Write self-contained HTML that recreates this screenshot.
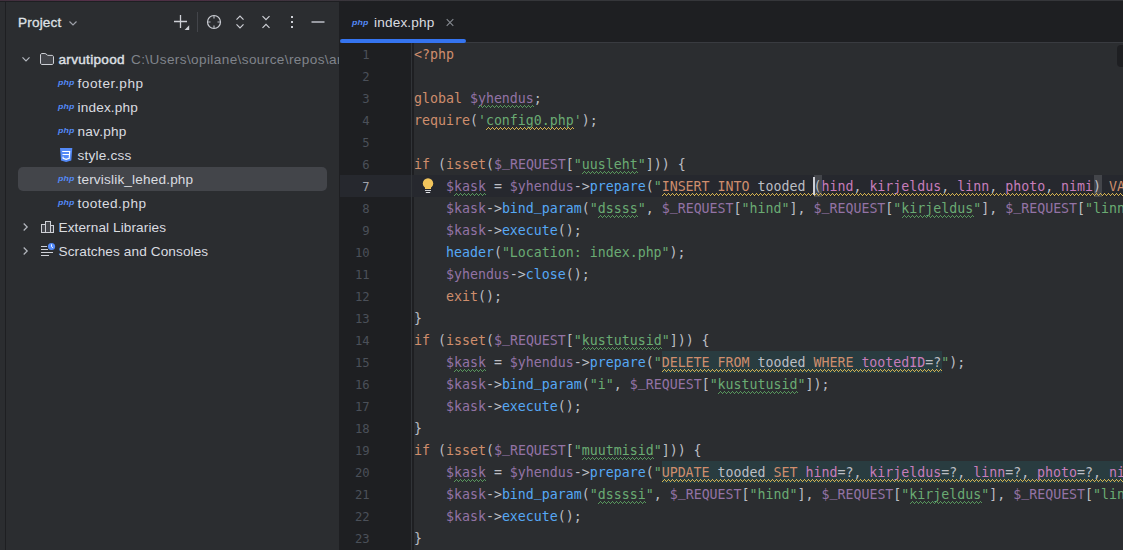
<!DOCTYPE html>
<html lang="et">
<head>
<meta charset="utf-8">
<title>index.php</title>
<style>
*{box-sizing:border-box;margin:0;padding:0}
html,body{width:1123px;height:550px;overflow:hidden;background:#2B2D30}
body{position:relative;font-family:"Liberation Sans",sans-serif;font-size:14px;color:#DFE1E5}
.abs{position:absolute}
#topline{left:0;top:0;width:1123px;height:1px;background:linear-gradient(90deg,#40303d 0,#553049 90px,#4a3043 200px,#3a353c 330px,#35363a 420px,#35363a 100%)}
#topdark{left:0;top:1px;width:1123px;height:1px;background:#1E1F22}
#stripe{left:5px;top:2px;width:1px;height:548px;background:#1E1F22}
#panel{left:6px;top:2px;width:333px;height:548px;background:#2B2D30;overflow:hidden}
#editor{left:339px;top:2px;width:784px;height:548px;background:#1E1F22;overflow:hidden}
/* panel (coords relative to page via wrappers offset) */
.t{position:absolute;white-space:pre;line-height:24px;height:24px;transform:translateY(1px);font-size:13.6px;letter-spacing:0.17px;color:#DADCE0}
.row{position:absolute;left:0;width:333px;height:24px}
.sel{position:absolute;left:12px;top:165px;width:309px;height:24px;border-radius:5px;background:#43454A}
.gray{color:#80848B}
.php{position:absolute;font-family:"Liberation Sans",sans-serif;font-style:italic;font-weight:bold;font-size:7.8px;letter-spacing:0.1px;margin-top:-0.5px;transform:scaleX(1.12);transform-origin:0 50%;color:#548AF7;line-height:24px;height:24px}
svg{position:absolute;overflow:visible}
/* editor */
#tabtxt{left:35px;top:9px;line-height:24px;color:#DADCE0;font-size:13.6px;letter-spacing:0.17px}
#uline{left:1px;top:37px;width:126px;height:4px;border-radius:2px;background:#3574F0}
#edline{left:1px;top:40px;width:783px;height:1px;background:#393B40}
#gutter{left:1px;top:41px;width:74px;height:507px;background:#1E1F22}
#gsep{left:72px;top:41px;width:1px;height:507px;background:#313438}
#code{left:75px;top:41px;width:709px;height:507px;background:#2B2D30}
#currow{left:1px;top:173px;width:783px;height:22px;background:#26282E}
#widget{left:778px;top:43px;width:12px;height:22px;border-radius:4px;background:#1E1F22}
.mono{font-family:"DejaVu Sans Mono","Liberation Mono",monospace;font-size:13.288px}
.no{position:absolute;left:0;width:30.6px;font-size:12.2px;text-align:right;height:22px;line-height:22px;color:#4B5059}
.no.cur{color:#A1A3AB}
#nums{left:0;top:42px;width:75px;height:507px}
#lines{left:76px;top:41px;width:2000px;height:507px;color:#BCBEC4}
.ln{position:absolute;left:0;height:22px;line-height:22px;white-space:pre}
.k{color:#CF8E6D}.v{color:#9373A5}.f{color:#56A8F5}.s{color:#6AAB73}.c{color:#C77DBB}.q{color:#BCBEC4}
.u{position:relative;top:-3px}
.inj{position:absolute;height:22px;background:#293C40}
.brace{position:absolute;top:175px;width:8px;height:22px;background:#43454A}
#caret{left:813px;top:177px;width:2px;height:18px;background:#CED0D6}
</style>
</head>
<body>
<div class="abs" id="topline"></div>
<div class="abs" id="topdark"></div>
<div class="abs" id="stripe"></div>

<div class="abs" id="panel">
  <div class="sel"></div>
  <div class="t" style="left:12px;top:8px;color:#DFE1E5;-webkit-text-stroke:0.3px #DFE1E5" id="ptitle">Project</div>
  <div class="t" style="left:52.5px;top:45px;letter-spacing:0.29px;-webkit-text-stroke:0.45px #DFE1E5" id="root">arvutipood</div>
  <div class="t gray" style="left:125px;top:45px;letter-spacing:0.38px" id="rootpath">C:\Users\opilane\source\repos\arvutipood</div>
  <div class="t" style="left:71.4px;top:69px;letter-spacing:0.59px">footer.php</div>
  <div class="t" style="left:71.5px;top:93px">index.php</div>
  <div class="t" style="left:71.5px;top:117px;letter-spacing:0.25px">nav.php</div>
  <div class="t" style="left:71.5px;top:141px;letter-spacing:0.22px">style.css</div>
  <div class="t" style="left:71.5px;top:165px">tervislik_lehed.php</div>
  <div class="t" style="left:71.5px;top:189px;letter-spacing:0.47px">tooted.php</div>
  <div class="t" style="left:52.5px;top:213px;letter-spacing:0.10px">External Libraries</div>
  <div class="t" style="left:52.5px;top:237px;letter-spacing:0.11px">Scratches and Consoles</div>
  <div class="php" style="left:52px;top:69px">php</div>
  <div class="php" style="left:52px;top:93px">php</div>
  <div class="php" style="left:52px;top:117px">php</div>
  <div class="php" style="left:52px;top:165px">php</div>
  <div class="php" style="left:52px;top:189px">php</div>
  
</div>

<svg class="abs" width="340" height="550" style="left:0;top:0" viewBox="0 0 340 550" fill="none">
  <!-- header chevron -->
  <path d="M69.5 21.5 L73 25 L76.5 21.5" stroke="#9DA0A8" stroke-width="1.2"/>
  <!-- plus -->
  <path d="M174 21.5 H187 M180.5 15 V28" stroke="#CED0D6" stroke-width="1.3"/>
  <path d="M184.6 29.9 H189.2 V25.3 Z" fill="#CED0D6"/>
  <rect x="197" y="12" width="1" height="20" fill="#43454A"/>
  <!-- locate -->
  <circle cx="214" cy="22" r="6.5" stroke="#CED0D6" stroke-width="1.2"/>
  <path d="M214 15.5 V18.5 M214 25.5 V28.5 M207.5 22 H210.5 M217.5 22 H220.5" stroke="#B4B8BF" stroke-width="1.2"/>
  <!-- expand all -->
  <path d="M236.5 19.7 L240 16.2 L243.5 19.7 M236.5 24.3 L240 27.8 L243.5 24.3" stroke="#CED0D6" stroke-width="1.2"/>
  <!-- collapse all -->
  <path d="M262.5 16.2 L266 19.7 L269.5 16.2 M262.5 27.8 L266 24.3 L269.5 27.8" stroke="#CED0D6" stroke-width="1.2"/>
  <!-- more -->
  <rect x="291" y="16" width="2" height="2" fill="#CED0D6"/><rect x="291" y="21" width="2" height="2" fill="#CED0D6"/><rect x="291" y="26" width="2" height="2" fill="#CED0D6"/>
  <!-- minimize -->
  <rect x="311.5" y="21.2" width="13" height="1.6" fill="#B4B6BD"/>
  <!-- tree chevrons -->
  <path d="M22.5 57.3 L26 60.8 L29.5 57.3" stroke="#B4B8BF" stroke-width="1.2"/>
  <path d="M23.7 223.5 L27.2 227 L23.7 230.5" stroke="#B4B8BF" stroke-width="1.2"/>
  <path d="M23.7 247.5 L27.2 251 L23.7 254.5" stroke="#B4B8BF" stroke-width="1.2"/>
  <!-- folder -->
  <path d="M40.5 55 C40.5 54.17 41.17 53.5 42 53.5 H44.9 C45.25 53.5 45.58 53.62 45.85 53.84 L47.6 55.27 C47.69 55.34 47.8 55.38 47.92 55.38 H52 C52.83 55.38 53.5 56.05 53.5 56.88 V63 C53.5 63.83 52.83 64.5 52 64.5 H42 C41.17 64.5 40.5 63.83 40.5 63 Z" fill="#43454A" stroke="#CED0D6" stroke-width="1"/>
  <!-- css shield -->
  <path d="M60 148 H72.3 L71.3 160.4 L66.15 162 L61 160.4 Z" fill="#548AF7"/>
  <path d="M62.2 151.5 H69.7 L69.2 158.3 L66.1 159.3 L63.1 158.3 L62.95 156.6 M62.5 154.5 H69.4" stroke="#FFFFFF" stroke-width="1.15"/>
  <!-- library -->
  <rect x="41.5" y="224.5" width="4" height="8" fill="#43454A" stroke="#CED0D6"/>
  <rect x="45.5" y="221.5" width="5" height="11" fill="#43454A" stroke="#CED0D6"/>
  <rect x="50.5" y="225.5" width="3" height="7" fill="#43454A" stroke="#CED0D6"/>
  <!-- scratches -->
  <path d="M41 246.5 H47 M41 249.5 H48 M41 252.5 H53 M41 255.5 H49" stroke="#CED0D6" stroke-width="1"/>
  <circle cx="51.5" cy="246.5" r="3.6" fill="#548AF7"/>
  <path d="M51.5 244.3 V246.7 L53 247.8" stroke="#FFFFFF" stroke-width="0.9"/>
</svg>

<div class="abs" id="editor">
  <div class="abs" id="gutter"></div>
  <div class="abs" id="code"></div>
  <div class="abs" id="currow"></div>
  <div class="abs" id="gsep"></div>
  <div class="abs" id="edline"></div>
  <div class="abs" id="uline"></div>
  <div class="php" style="left:13px;top:9px">php</div>
  <div class="abs" id="tabtxt">index.php</div>
  <div class="abs" id="widget"></div>
  <div class="abs mono" id="nums"><div class="no" style="top:0px">1</div><div class="no" style="top:22px">2</div><div class="no" style="top:44px">3</div><div class="no" style="top:66px">4</div><div class="no" style="top:88px">5</div><div class="no" style="top:110px">6</div><div class="no cur" style="top:132px">7</div><div class="no" style="top:154px">8</div><div class="no" style="top:176px">9</div><div class="no" style="top:198px">10</div><div class="no" style="top:220px">11</div><div class="no" style="top:242px">12</div><div class="no" style="top:264px">13</div><div class="no" style="top:286px">14</div><div class="no" style="top:308px">15</div><div class="no" style="top:330px">16</div><div class="no" style="top:352px">17</div><div class="no" style="top:374px">18</div><div class="no" style="top:396px">19</div><div class="no" style="top:418px">20</div><div class="no" style="top:440px">21</div><div class="no" style="top:462px">22</div><div class="no" style="top:484px">23</div></div>
  <svg width="784" height="42" viewBox="339 2 784 42" style="left:0;top:0" fill="none">
    <path d="M446.7 19.2 L453.3 25.8 M453.3 19.2 L446.7 25.8" stroke="#868A91" stroke-width="1.1"/>
  </svg>
</div>

<!-- code layer in page coordinates -->
<div class="abs" id="codelayer" style="left:414px;top:43px;width:709px;height:507px;overflow:hidden">
  <div class="abs" style="left:-414px;top:-43px;width:3000px;height:550px">
    <div class="inj" style="left:662px;top:351px;width:280px"></div><div class="inj" style="left:662px;top:461px;width:632px"></div>
    <div class="brace" style="left:814px"></div>
    <div class="brace" style="left:1094px"></div>
    <div class="abs mono" style="left:414px;top:44px;color:#BCBEC4">
<div class="ln" style="top:0px"><span class="k">&lt;?php</span></div>
<div class="ln" style="top:22px"></div>
<div class="ln" style="top:44px"><span class="k">global</span> <span class="v">$yhendus</span>;</div>
<div class="ln" style="top:66px"><span class="k">require</span>(<span class="s">'config0.php'</span>);</div>
<div class="ln" style="top:88px"></div>
<div class="ln" style="top:110px"><span class="k">if</span> (<span class="k">isset</span>(<span class="v">$<span class="u">_</span>REQUEST</span>[<span class="s">"uusleht"</span>])) {</div>
<div class="ln" style="top:132px">    <span class="v">$kask</span> = <span class="v">$yhendus</span>-&gt;<span class="f">prepare</span>(<span class="s">"</span><span class="k">INSERT</span><span class="q"> </span><span class="k">INTO</span><span class="q"> tooded </span><span class="q">(</span><span class="c">hind</span><span class="q">, </span><span class="c">kirjeldus</span><span class="q">, </span><span class="c">linn</span><span class="q">, </span><span class="c">photo</span><span class="q">, </span><span class="c">nimi</span><span class="q">)</span><span class="q"> </span><span class="k">VALUES</span><span class="q"> (?, ?, ?, ?, ?)</span><span class="s">"</span>);</div>
<div class="ln" style="top:154px">    <span class="v">$kask</span>-&gt;<span class="f">bind<span class="u">_</span>param</span>(<span class="s">"dssss"</span>, <span class="v">$<span class="u">_</span>REQUEST</span>[<span class="s">"hind"</span>], <span class="v">$<span class="u">_</span>REQUEST</span>[<span class="s">"kirjeldus"</span>], <span class="v">$<span class="u">_</span>REQUEST</span>[<span class="s">"linn"</span>], <span class="v">$<span class="u">_</span>REQUEST</span>[<span class="s">"photo"</span>], <span class="v">$<span class="u">_</span>REQUEST</span>[<span class="s">"nimi"</span>]);</div>
<div class="ln" style="top:176px">    <span class="v">$kask</span>-&gt;<span class="f">execute</span>();</div>
<div class="ln" style="top:198px">    <span class="f">header</span>(<span class="s">"Location: index.php"</span>);</div>
<div class="ln" style="top:220px">    <span class="v">$yhendus</span>-&gt;<span class="f">close</span>();</div>
<div class="ln" style="top:242px">    <span class="k">exit</span>();</div>
<div class="ln" style="top:264px">}</div>
<div class="ln" style="top:286px"><span class="k">if</span> (<span class="k">isset</span>(<span class="v">$<span class="u">_</span>REQUEST</span>[<span class="s">"kustutusid"</span>])) {</div>
<div class="ln" style="top:308px">    <span class="v">$kask</span> = <span class="v">$yhendus</span>-&gt;<span class="f">prepare</span>(<span class="s">"</span><span class="k">DELETE</span><span class="q"> </span><span class="k">FROM</span><span class="q"> tooded </span><span class="k">WHERE</span><span class="q"> </span><span class="c">tootedID</span><span class="q">=?</span><span class="s">"</span>);</div>
<div class="ln" style="top:330px">    <span class="v">$kask</span>-&gt;<span class="f">bind<span class="u">_</span>param</span>(<span class="s">"i"</span>, <span class="v">$<span class="u">_</span>REQUEST</span>[<span class="s">"kustutusid"</span>]);</div>
<div class="ln" style="top:352px">    <span class="v">$kask</span>-&gt;<span class="f">execute</span>();</div>
<div class="ln" style="top:374px">}</div>
<div class="ln" style="top:396px"><span class="k">if</span> (<span class="k">isset</span>(<span class="v">$<span class="u">_</span>REQUEST</span>[<span class="s">"muutmisid"</span>])) {</div>
<div class="ln" style="top:418px">    <span class="v">$kask</span> = <span class="v">$yhendus</span>-&gt;<span class="f">prepare</span>(<span class="s">"</span><span class="k">UPDATE</span><span class="q"> tooded </span><span class="k">SET</span><span class="q"> </span><span class="c">hind</span><span class="q">=?, </span><span class="c">kirjeldus</span><span class="q">=?, </span><span class="c">linn</span><span class="q">=?, </span><span class="c">photo</span><span class="q">=?, </span><span class="c">nimi</span><span class="q">=? </span><span class="k">WHERE</span><span class="q"> </span><span class="c">tootedID</span><span class="q">=?</span><span class="s">"</span>);</div>
<div class="ln" style="top:440px">    <span class="v">$kask</span>-&gt;<span class="f">bind<span class="u">_</span>param</span>(<span class="s">"dssssi"</span>, <span class="v">$<span class="u">_</span>REQUEST</span>[<span class="s">"hind"</span>], <span class="v">$<span class="u">_</span>REQUEST</span>[<span class="s">"kirjeldus"</span>], <span class="v">$<span class="u">_</span>REQUEST</span>[<span class="s">"linn"</span>], <span class="v">$<span class="u">_</span>REQUEST</span>[<span class="s">"photo"</span>], <span class="v">$<span class="u">_</span>REQUEST</span>[<span class="s">"nimi"</span>], <span class="v">$<span class="u">_</span>REQUEST</span>[<span class="s">"muutmisid"</span>]);</div>
<div class="ln" style="top:462px">    <span class="v">$kask</span>-&gt;<span class="f">execute</span>();</div>
<div class="ln" style="top:484px">}</div>
    </div>
    <svg width="3000" height="550" style="left:0;top:0">
      <defs>
        <pattern id="wg" x="414" y="43" width="4" height="22" patternUnits="userSpaceOnUse" shape-rendering="crispEdges"><rect x="0" y="20" width="1" height="1" fill="#57965C"/><rect x="1" y="19" width="1" height="1" fill="#57965C"/><rect x="2" y="18" width="1" height="1" fill="#57965C"/><rect x="3" y="19" width="1" height="1" fill="#57965C"/></pattern>
        <pattern id="wy" x="414" y="43" width="4" height="22" patternUnits="userSpaceOnUse" shape-rendering="crispEdges"><rect x="0" y="20" width="1" height="1" fill="#D6B24E"/><rect x="1" y="19" width="1" height="1" fill="#D6B24E"/><rect x="2" y="18" width="1" height="1" fill="#D6B24E"/><rect x="3" y="19" width="1" height="1" fill="#D6B24E"/></pattern>
      </defs>
      <rect x="478" y="105" width="56" height="3" fill="url(#wg)"/>
<rect x="486" y="127" width="88" height="3" fill="url(#wy)"/>
<rect x="582" y="171" width="56" height="3" fill="url(#wg)"/>
<rect x="454" y="193" width="32" height="3" fill="url(#wg)"/>
<rect x="662" y="193" width="624" height="3" fill="url(#wy)"/>
<rect x="598" y="215" width="40" height="3" fill="url(#wg)"/>
<rect x="902" y="215" width="72" height="3" fill="url(#wg)"/>
<rect x="582" y="347" width="80" height="3" fill="url(#wg)"/>
<rect x="454" y="369" width="32" height="3" fill="url(#wg)"/>
<rect x="662" y="369" width="280" height="3" fill="url(#wy)"/>
<rect x="718" y="391" width="80" height="3" fill="url(#wg)"/>
<rect x="582" y="457" width="72" height="3" fill="url(#wg)"/>
<rect x="454" y="479" width="32" height="3" fill="url(#wg)"/>
<rect x="662" y="479" width="632" height="3" fill="url(#wy)"/>
<rect x="598" y="501" width="48" height="3" fill="url(#wg)"/>
<rect x="910" y="501" width="72" height="3" fill="url(#wg)"/>
      <circle cx="428" cy="183.4" r="5.2" fill="#F2C55C"/>
      <rect x="425" y="185" width="6" height="4" fill="#F2C55C"/>
      <rect x="425" y="190" width="6" height="1" fill="#CED0D6"/>
      <rect x="425.8" y="192" width="4.4" height="1" fill="#DFE1E5"/>
    </svg>
    <div class="abs" id="caret"></div>
  </div>
</div>
</body>
</html>
